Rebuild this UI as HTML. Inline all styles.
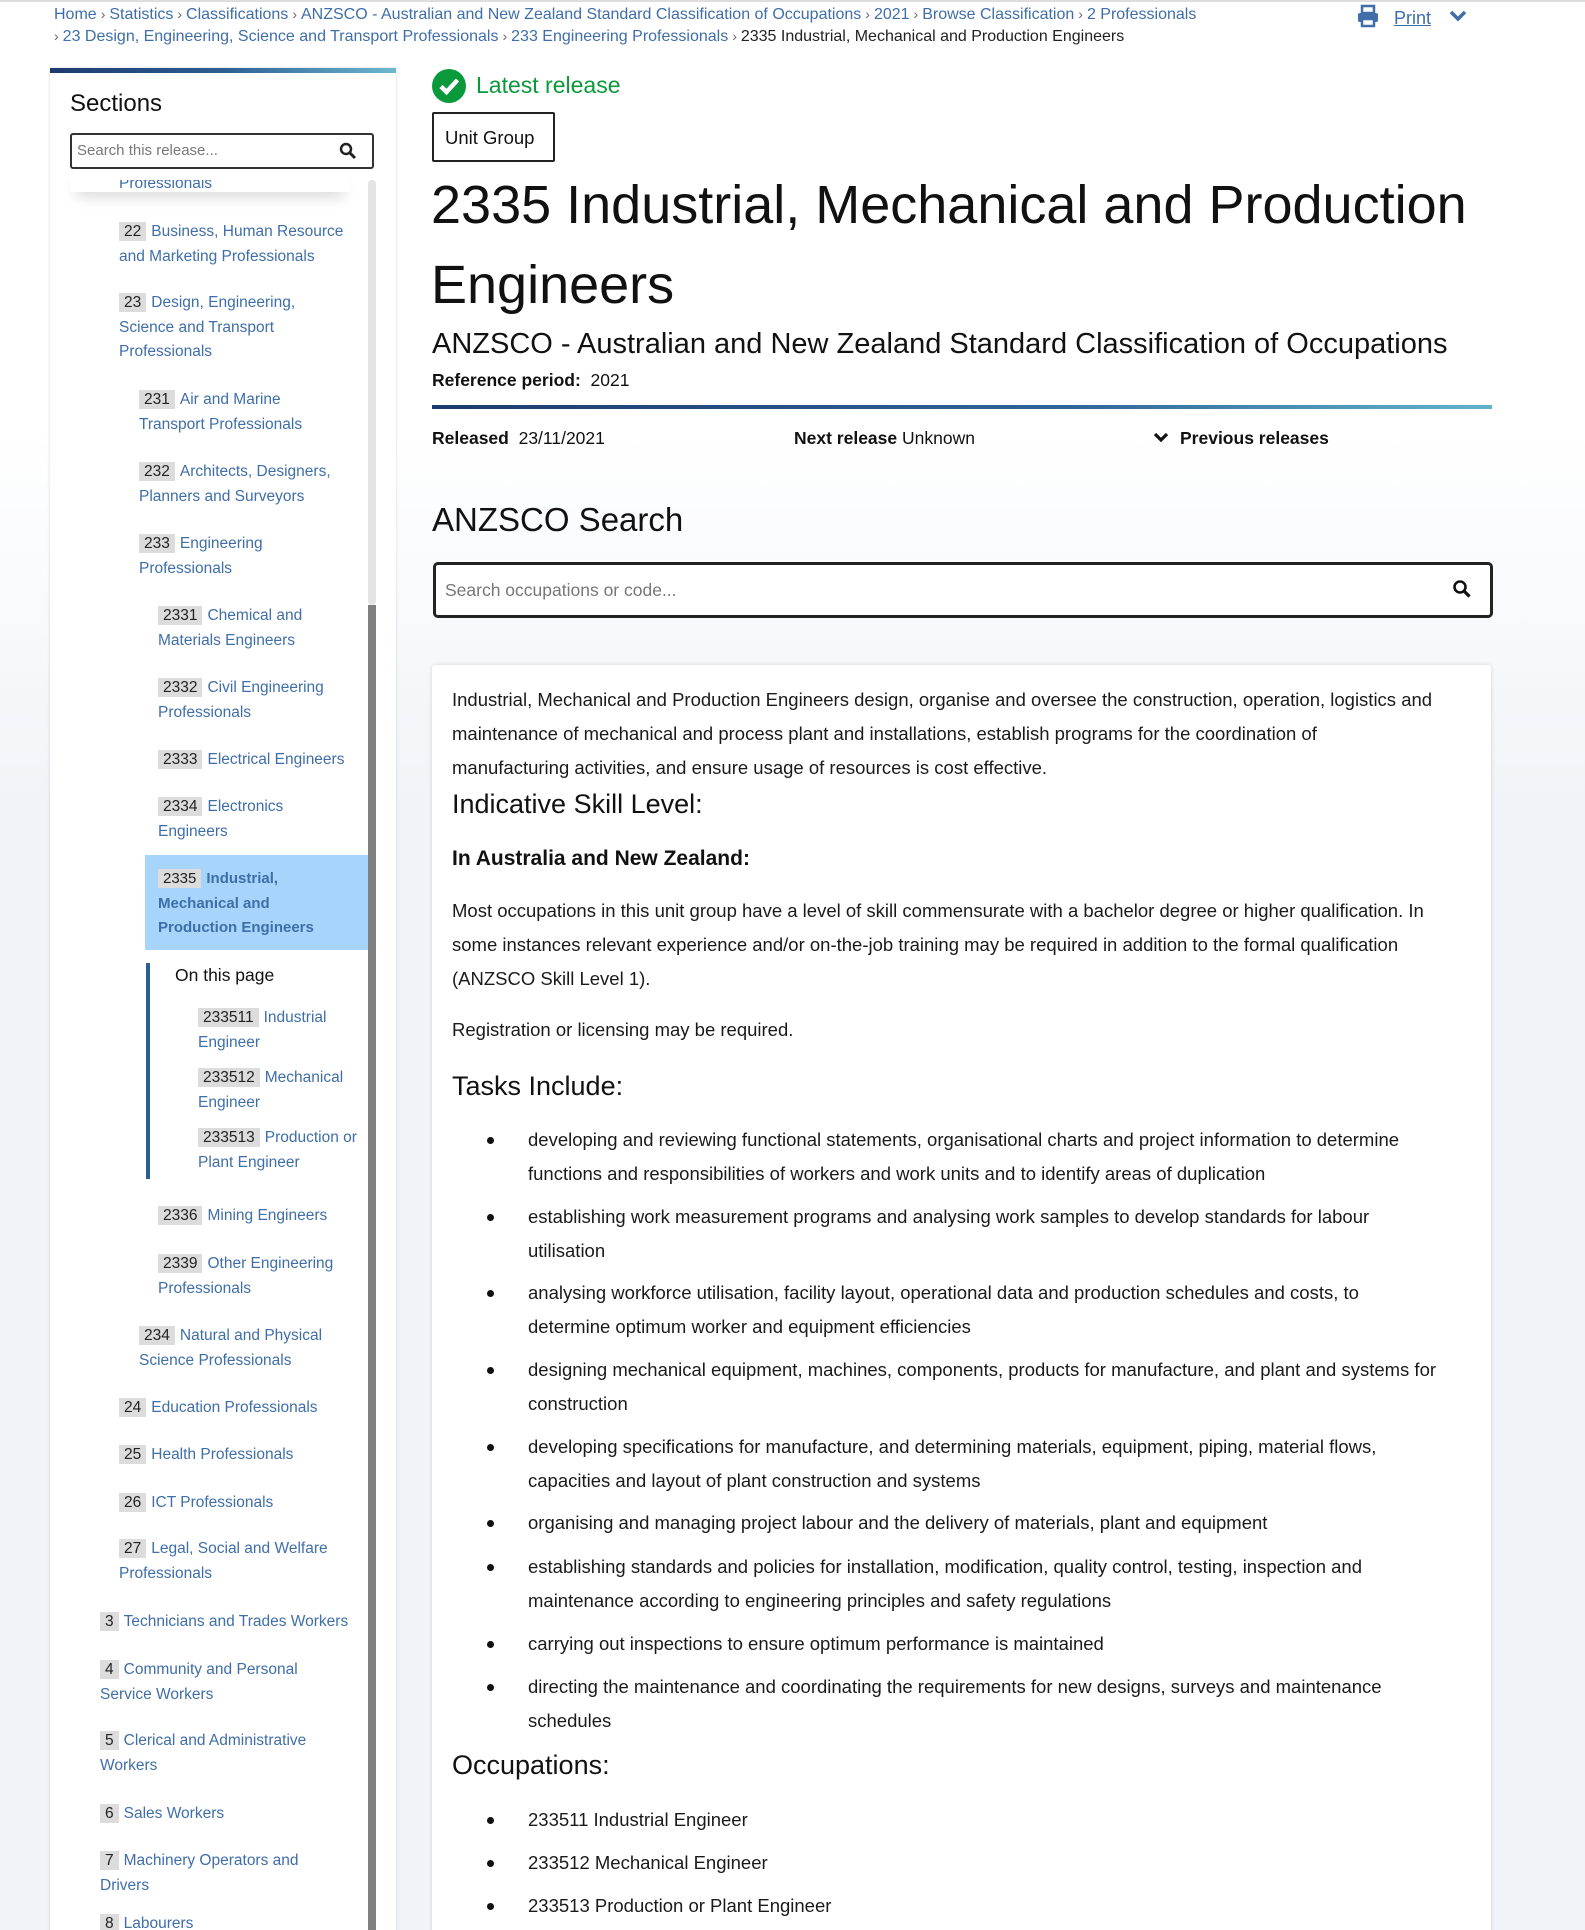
<!DOCTYPE html>
<html><head><meta charset="utf-8"><style>
html{margin:0;padding:0;height:1930px;overflow:hidden;background:#f0f4f8}
body{margin:0;padding:0}
body{width:1585px;height:1930px;position:relative;overflow:hidden;font-family:"Liberation Sans",Arial,sans-serif;color:#222;background:linear-gradient(#fff 0,#fff 430px,#f0f4f8 800px,#f0f4f8 100%)}
.a{position:absolute;white-space:nowrap}
.bc{font-size:16px;color:#3f6ea8;line-height:20px}
.bc b{font-weight:normal;color:#666;padding:0 4px;font-size:14px}
.side{position:absolute;left:50px;top:68px;width:346px;height:1900px;background:#fff;box-shadow:0 0 3px rgba(0,0,0,.15)}
.side:before{content:"";position:absolute;left:0;top:0;right:0;height:5px;background:linear-gradient(90deg,#1d3a70,#2c5e94 50%,#6cb8d0)}
.list{position:absolute;left:0;top:112px;width:346px;height:1760px;overflow:hidden}
.it{position:absolute;font-size:15.5px;line-height:24.5px;color:#3f6ea8;white-space:nowrap}
.bd{background:#dcdcdc;color:#222;padding:1px 5px;margin-right:5px}
.mt{position:absolute;font-size:18.5px;line-height:34px;white-space:nowrap;color:#1a1a1a}
.dot{position:absolute;left:487px;width:7px;height:7px;border-radius:50%;background:#111}
</style></head><body>
<div style="position:absolute;left:0;top:0;width:1585px;height:2px;background:#ddd"></div>
<div class="a bc" style="left:54px;top:4px">Home<b>›</b>Statistics<b>›</b>Classifications<b>›</b>ANZSCO - Australian and New Zealand Standard Classification of Occupations<b>›</b>2021<b>›</b>Browse Classification<b>›</b>2 Professionals</div>
<div class="a bc" style="left:54px;top:26px"><b style="padding-left:0">›</b>23 Design, Engineering, Science and Transport Professionals<b>›</b>233 Engineering Professionals<b>›</b><span style="color:#222">2335 Industrial, Mechanical and Production Engineers</span></div>
<svg class="a" style="left:1356px;top:4px" width="24" height="24" viewBox="0 0 24 24"><rect x="6" y="2" width="12" height="7" fill="none" stroke="#3f6ea8" stroke-width="2.5"/><rect x="2" y="9" width="20" height="9" rx="2" fill="#3f6ea8"/><rect x="6" y="15" width="12" height="7" fill="#fff" stroke="#3f6ea8" stroke-width="2.5"/></svg>
<div class="a" style="left:1394px;top:8px;font-size:18px;color:#3f6ea8;text-decoration:underline">Print</div>
<svg class="a" style="left:1449px;top:9px" width="18" height="14" viewBox="0 0 18 14"><path d="M2 3l7 7 7-7" fill="none" stroke="#3f6ea8" stroke-width="3.5"/></svg>

<div class="side">
<div class="a" style="left:20px;top:22px;font-size:24px;color:#111">Sections</div>
<div class="a" style="left:20px;top:65px;width:300px;height:32px;border:2px solid #333;border-radius:3px"></div>
<div class="a" style="left:27px;top:74px;font-size:15px;color:#777">Search this release...</div>
<svg class="a" style="left:289px;top:74px" width="18" height="18" viewBox="0 0 18 18"><circle cx="7" cy="7" r="5" fill="none" stroke="#222" stroke-width="2.5"/><path d="M11 11l5 5" stroke="#222" stroke-width="3"/></svg>
<div class="a" style="left:318px;top:112px;width:8px;height:425px;background:#e4e4e4;border-radius:4px"></div>
<div class="a" style="left:318px;top:537px;width:8px;height:1400px;background:#808080"></div>
<div class="list">
<div class="it" style="left:69px;top:-8px">Professionals</div>
<div class="a" style="left:20px;top:-12px;width:280px;height:24px;box-shadow:0 10px 14px -6px rgba(0,0,0,.18)"></div>
<div class="it" style="left:69px;top:40px"><span class="bd">22</span>Business, Human Resource<br>and Marketing Professionals</div>
<div class="it" style="left:69px;top:111px"><span class="bd">23</span>Design, Engineering,<br>Science and Transport<br>Professionals</div>
<div class="it" style="left:89px;top:208px"><span class="bd">231</span>Air and Marine<br>Transport Professionals</div>
<div class="it" style="left:89px;top:280px"><span class="bd">232</span>Architects, Designers,<br>Planners and Surveyors</div>
<div class="it" style="left:89px;top:352px"><span class="bd">233</span>Engineering<br>Professionals</div>
<div class="it" style="left:108px;top:424px"><span class="bd">2331</span>Chemical and<br>Materials Engineers</div>
<div class="it" style="left:108px;top:496px"><span class="bd">2332</span>Civil Engineering<br>Professionals</div>
<div class="it" style="left:108px;top:568px"><span class="bd">2333</span>Electrical Engineers</div>
<div class="it" style="left:108px;top:615px"><span class="bd">2334</span>Electronics<br>Engineers</div>
<div class="a" style="left:95px;top:675px;width:223px;height:95px;background:#a6d4fa"></div>
<div class="it" style="left:108px;top:687px;font-weight:bold;font-size:15px"><span class="bd" style="font-weight:normal">2335</span>Industrial,<br>Mechanical and<br>Production Engineers</div>
<div class="a" style="left:96px;top:783px;width:4px;height:216px;background:#2c5e94"></div>
<div class="a" style="left:125px;top:785px;font-size:17.5px;color:#111">On this page</div>
<div class="it" style="left:148px;top:826px"><span class="bd">233511</span>Industrial<br>Engineer</div>
<div class="it" style="left:148px;top:886px"><span class="bd">233512</span>Mechanical<br>Engineer</div>
<div class="it" style="left:148px;top:946px"><span class="bd">233513</span>Production or<br>Plant Engineer</div>
<div class="it" style="left:108px;top:1024px"><span class="bd">2336</span>Mining Engineers</div>
<div class="it" style="left:108px;top:1072px"><span class="bd">2339</span>Other Engineering<br>Professionals</div>
<div class="it" style="left:89px;top:1144px"><span class="bd">234</span>Natural and Physical<br>Science Professionals</div>
<div class="it" style="left:69px;top:1216px"><span class="bd">24</span>Education Professionals</div>
<div class="it" style="left:69px;top:1263px"><span class="bd">25</span>Health Professionals</div>
<div class="it" style="left:69px;top:1311px"><span class="bd">26</span>ICT Professionals</div>
<div class="it" style="left:69px;top:1357px"><span class="bd">27</span>Legal, Social and Welfare<br>Professionals</div>
<div class="it" style="left:50px;top:1430px"><span class="bd">3</span>Technicians and Trades Workers</div>
<div class="it" style="left:50px;top:1478px"><span class="bd">4</span>Community and Personal<br>Service Workers</div>
<div class="it" style="left:50px;top:1549px"><span class="bd">5</span>Clerical and Administrative<br>Workers</div>
<div class="it" style="left:50px;top:1622px"><span class="bd">6</span>Sales Workers</div>
<div class="it" style="left:50px;top:1669px"><span class="bd">7</span>Machinery Operators and<br>Drivers</div>
<div class="it" style="left:50px;top:1732px"><span class="bd">8</span>Labourers</div>
</div>
</div>

<svg class="a" style="left:432px;top:69px" width="34" height="34" viewBox="0 0 34 34"><circle cx="17" cy="17" r="17" fill="#0a9a3c"/><path d="M9 17.5l5.5 5.5L25.5 11" fill="none" stroke="#fff" stroke-width="4.5"/></svg>
<div class="a" style="left:476px;top:72px;font-size:23px;color:#0a9a3c">Latest release</div>
<div class="a" style="left:432px;top:112px;width:119px;height:46px;border:2px solid #222;border-radius:2px"></div>
<div class="a" style="left:445px;top:127px;font-size:18.5px;color:#111">Unit Group</div>
<div class="a" style="left:431px;top:165px;font-size:54px;line-height:80px;color:#111">2335 Industrial, Mechanical and Production<br>Engineers</div>
<div class="a" style="left:432px;top:328px;font-size:29px;color:#111">ANZSCO - Australian and New Zealand Standard Classification of Occupations</div>
<div class="a" style="left:432px;top:370px;font-size:17.5px;color:#111"><span style="font-weight:bold">Reference period:</span>&nbsp; 2021</div>
<div class="a" style="left:432px;top:405px;width:1060px;height:4px;background:linear-gradient(90deg,#1d3a70,#2f6498 60%,#62b3cc)"></div>
<div class="a" style="left:432px;top:428px;font-size:17.5px;color:#111"><b>Released</b>&nbsp; 23/11/2021</div>
<div class="a" style="left:794px;top:428px;font-size:17.5px;color:#111"><b>Next release</b> Unknown</div>
<svg class="a" style="left:1153px;top:431px" width="16" height="14" viewBox="0 0 16 14"><path d="M2 3l6 6 6-6" fill="none" stroke="#111" stroke-width="3.2"/></svg>
<div class="a" style="left:1180px;top:428px;font-size:17.5px;color:#111;font-weight:bold">Previous releases</div>
<div class="a" style="left:432px;top:501px;font-size:33px;color:#111">ANZSCO Search</div>
<div class="a" style="left:433px;top:562px;width:1054px;height:50px;border:3px solid #222;border-radius:5px;background:#fff"></div>
<div class="a" style="left:445px;top:580px;font-size:17.5px;color:#777">Search occupations or code...</div>
<svg class="a" style="left:1452px;top:579px" width="20" height="20" viewBox="0 0 20 20"><circle cx="8" cy="8" r="5.5" fill="none" stroke="#111" stroke-width="2.6"/><path d="M12 12l5.5 5.5" stroke="#111" stroke-width="3.2"/></svg>

<div class="a" style="left:432px;top:665px;width:1059px;height:1300px;background:#fff;box-shadow:0 0 4px rgba(0,0,0,.15);border-radius:3px"></div>
<div class="mt" style="left:452px;top:683px">Industrial, Mechanical and Production Engineers design, organise and oversee the construction, operation, logistics and<br>maintenance of mechanical and process plant and installations, establish programs for the coordination of<br>manufacturing activities, and ensure usage of resources is cost effective.</div>
<div class="a" style="left:452px;top:789px;font-size:27px;color:#111">Indicative Skill Level:</div>
<div class="a" style="left:452px;top:847px;font-size:21px;color:#111;font-weight:bold">In Australia and New Zealand:</div>
<div class="mt" style="left:452px;top:894px">Most occupations in this unit group have a level of skill commensurate with a bachelor degree or higher qualification. In<br>some instances relevant experience and/or on-the-job training may be required in addition to the formal qualification<br>(ANZSCO Skill Level 1).</div>
<div class="mt" style="left:452px;top:1013px">Registration or licensing may be required.</div>
<div class="a" style="left:452px;top:1071px;font-size:27px;color:#111">Tasks Include:</div>

<div class="dot" style="top:1137px"></div><div class="mt" style="left:528px;top:1123px">developing and reviewing functional statements, organisational charts and project information to determine<br>functions and responsibilities of workers and work units and to identify areas of duplication</div>
<div class="dot" style="top:1214px"></div><div class="mt" style="left:528px;top:1200px">establishing work measurement programs and analysing work samples to develop standards for labour<br>utilisation</div>
<div class="dot" style="top:1290px"></div><div class="mt" style="left:528px;top:1276px">analysing workforce utilisation, facility layout, operational data and production schedules and costs, to<br>determine optimum worker and equipment efficiencies</div>
<div class="dot" style="top:1367px"></div><div class="mt" style="left:528px;top:1353px">designing mechanical equipment, machines, components, products for manufacture, and plant and systems for<br>construction</div>
<div class="dot" style="top:1444px"></div><div class="mt" style="left:528px;top:1430px">developing specifications for manufacture, and determining materials, equipment, piping, material flows,<br>capacities and layout of plant construction and systems</div>
<div class="dot" style="top:1520px"></div><div class="mt" style="left:528px;top:1506px">organising and managing project labour and the delivery of materials, plant and equipment</div>
<div class="dot" style="top:1564px"></div><div class="mt" style="left:528px;top:1550px">establishing standards and policies for installation, modification, quality control, testing, inspection and<br>maintenance according to engineering principles and safety regulations</div>
<div class="dot" style="top:1641px"></div><div class="mt" style="left:528px;top:1627px">carrying out inspections to ensure optimum performance is maintained</div>
<div class="dot" style="top:1684px"></div><div class="mt" style="left:528px;top:1670px">directing the maintenance and coordinating the requirements for new designs, surveys and maintenance<br>schedules</div>
<div class="a" style="left:452px;top:1750px;font-size:27px;color:#111">Occupations:</div>
<div class="dot" style="top:1817px"></div><div class="mt" style="left:528px;top:1803px">233511 Industrial Engineer</div>
<div class="dot" style="top:1860px"></div><div class="mt" style="left:528px;top:1846px">233512 Mechanical Engineer</div>
<div class="dot" style="top:1903px"></div><div class="mt" style="left:528px;top:1889px">233513 Production or Plant Engineer</div>
</body></html>
